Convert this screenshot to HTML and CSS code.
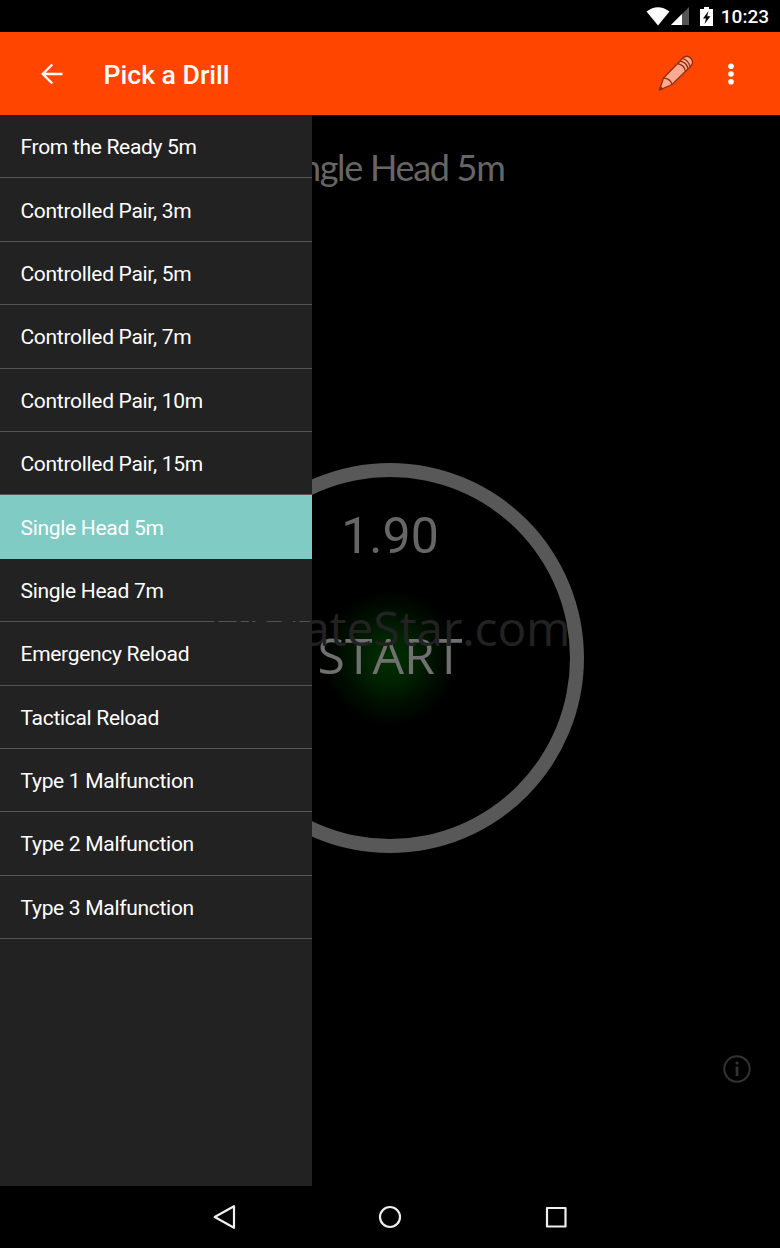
FILE: index.html
```html
<!DOCTYPE html>
<html lang="en">
<head>
    <meta charset="UTF-8">
    <meta name="viewport" content="width=device-width, initial-scale=1.0">
    <title>Pick a Drill</title>
    <link rel="stylesheet" href="styles.css">
</head>
<body>
    <div class="status-bar">
        <svg class="wifi" width="24" height="19" viewBox="0 0 24 19">
            <path d="M0.5 4.5Q12 -4 23.5 4.5L12 18.5Z" fill="#fff"/>
        </svg>
        <svg class="signal" width="18" height="18" viewBox="0 0 18 18">
            <path d="M18 0V18H0Z" fill="#555"/>
            <path d="M11 7V18H0Z" fill="#fff"/>
        </svg>
        <svg class="battery" width="13" height="19" viewBox="0 0 13 19">
            <path d="M4 0H9V2H13V19H0V2H4Z" fill="#fff"/>
            <path d="M8.5 4L3 11.5H6L4.5 17L10.5 9.3H7.2Z" fill="#000"/>
        </svg>
        <span class="clock">10:23</span>
    </div>

    <header class="toolbar">
        <svg class="back" width="22" height="22" viewBox="0 0 22 22" fill="none" stroke="#fff" stroke-width="2.4">
            <path d="M21.5 11H2.5M11.3 1.5L1.8 11L11.3 20.5"/>
        </svg>
        <h1>Pick a Drill</h1>
        <svg class="pencil" width="36" height="37" viewBox="0 0 36 37" stroke="#8f3010" stroke-width="1.3" stroke-linejoin="round">
            <path d="M1.5 35L5.5 23L24.5 3.5Q29 -1 33 3.5Q36.5 8 32 12L14 29.5Z" fill="#ffab91"/>
            <path d="M5.5 23Q12.5 23.5 14 29.5M19.5 8.5Q26.5 10 27.5 16.5M22 6Q29 7.5 30 14M24.5 3.5Q31 5.5 32 12" fill="none"/>
            <path d="M1.5 35L2.5 32L4.5 33.7Z" fill="#8f3010"/>
        </svg>
        <svg class="more" width="6" height="22" viewBox="0 0 6 22" fill="#fff">
            <circle cx="3" cy="3.2" r="2.8"/>
            <circle cx="3" cy="11" r="2.8"/>
            <circle cx="3" cy="18.8" r="2.8"/>
        </svg>
    </header>

    <main class="content">
        <h2 class="drill-name">Single Head 5m</h2>
        <div class="dial">
            <div class="par-time">1.90</div>
            <div class="start">START</div>
        </div>
        <svg class="info" width="28" height="28" viewBox="0 0 28 28">
            <circle cx="14" cy="14" r="12.7" fill="none" stroke="#333" stroke-width="2"/>
            <path d="M14 11.5V21" stroke="#333" stroke-width="2.8"/>
            <circle cx="14" cy="8" r="1.6" fill="#333"/>
        </svg>

        <ul class="drawer">
            <li>From the Ready 5m</li>
            <li>Controlled Pair, 3m</li>
            <li>Controlled Pair, 5m</li>
            <li>Controlled Pair, 7m</li>
            <li>Controlled Pair, 10m</li>
            <li>Controlled Pair, 15m</li>
            <li class="selected">Single Head 5m</li>
            <li>Single Head 7m</li>
            <li>Emergency Reload</li>
            <li>Tactical Reload</li>
            <li>Type 1 Malfunction</li>
            <li>Type 2 Malfunction</li>
            <li>Type 3 Malfunction</li>
        </ul>
        <div class="watermark">UpdateStar.com</div>
    </main>

    <nav class="nav-bar">
        <svg width="24" height="26" viewBox="0 0 24 26" fill="none" stroke="#eee" stroke-width="2.2" stroke-linejoin="round">
            <path d="M22 2.2V23.8L2.7 13Z"/>
        </svg>
        <svg width="24" height="24" viewBox="0 0 24 24" fill="none" stroke="#eee" stroke-width="2.2">
            <circle cx="12" cy="12" r="10"/>
        </svg>
        <svg width="24" height="24" viewBox="0 0 24 24" fill="none" stroke="#eee" stroke-width="2.2" stroke-linejoin="round">
            <rect x="3" y="3" width="18.5" height="18.5"/>
        </svg>
    </nav>
</body>
</html>
```
FILE: styles.css
```css
* {
    box-sizing: border-box;
}
body {
    margin: 0;
    width: 780px;
    height: 1248px;
    display: flex;
    flex-direction: column;
    overflow: hidden;
    background-color: #000;
    color: #fff;
    font-family: Roboto, sans-serif;
}
svg {
    display: block;
    flex: none;
}
.status-bar {
    height: 32px;
    display: flex;
    justify-content: flex-end;
    align-items: center;
    padding-right: 11px;
}
.signal {
    margin-left: 1px;
}
.battery {
    margin-left: 11px;
}
.clock {
    margin: 2px 0 0 8px;
    font-size: 19px;
    font-weight: 500;
    line-height: 22px;
}
.toolbar {
    height: 83px;
    display: flex;
    align-items: center;
    padding: 0 46px 0 41px;
    background-color: #ff4500;
}
.toolbar h1 {
    flex: 1;
    margin: 2px 0 0 40.5px;
    font-size: 26.6px;
    font-weight: 500;
}
.more {
    margin-left: 34px;
}
.content {
    position: relative;
    height: 1071px;
    display: flex;
    flex-direction: column;
    align-items: center;
    background-color: #000;
}
.drill-name {
    margin: 28px 0 0;
    color: #666;
    font-family: Lato, sans-serif;
    font-size: 36px;
    font-weight: 400;
    line-height: 48px;
    letter-spacing: -1.3px;
}
.dial {
    width: 388px;
    height: 390px;
    margin-top: 272px;
    display: flex;
    flex-direction: column;
    align-items: center;
    border: 14px solid #585858;
    border-radius: 50%;
    background: radial-gradient(circle at 50% 50%, #002f00 0, #002200 25px, #001000 45px, #000 68px);
}
.par-time {
    margin-top: 29px;
    color: #666;
    font-size: 50px;
    line-height: 60px;
}
.start {
    margin-top: 57px;
    color: #707070;
    font-family: "Open Sans", sans-serif;
    font-size: 50px;
    line-height: 64px;
}
.info {
    align-self: flex-end;
    margin: 202px 29px 0 0;
}
.drawer {
    position: absolute;
    top: 0;
    left: 0;
    width: 312px;
    height: 100%;
    margin: 0;
    padding: 0;
    list-style: none;
    background-color: #222;
}
.drawer li {
    height: 63.4px;
    display: flex;
    align-items: center;
    padding: 2px 0 0 20.5px;
    border-bottom: 1px solid #555;
    font-size: 21px;
    letter-spacing: -0.3px;
}
.drawer .selected {
    background-color: #80cbc4;
    border-color: #80cbc4;
}
.watermark {
    position: absolute;
    top: 480px;
    left: 210px;
    color: #222;
    font-family: "Open Sans", sans-serif;
    font-size: 48px;
    line-height: 66px;
    letter-spacing: -0.2px;
}
.nav-bar {
    height: 62px;
    display: flex;
    justify-content: center;
    align-items: center;
    gap: 142px;
}
```
